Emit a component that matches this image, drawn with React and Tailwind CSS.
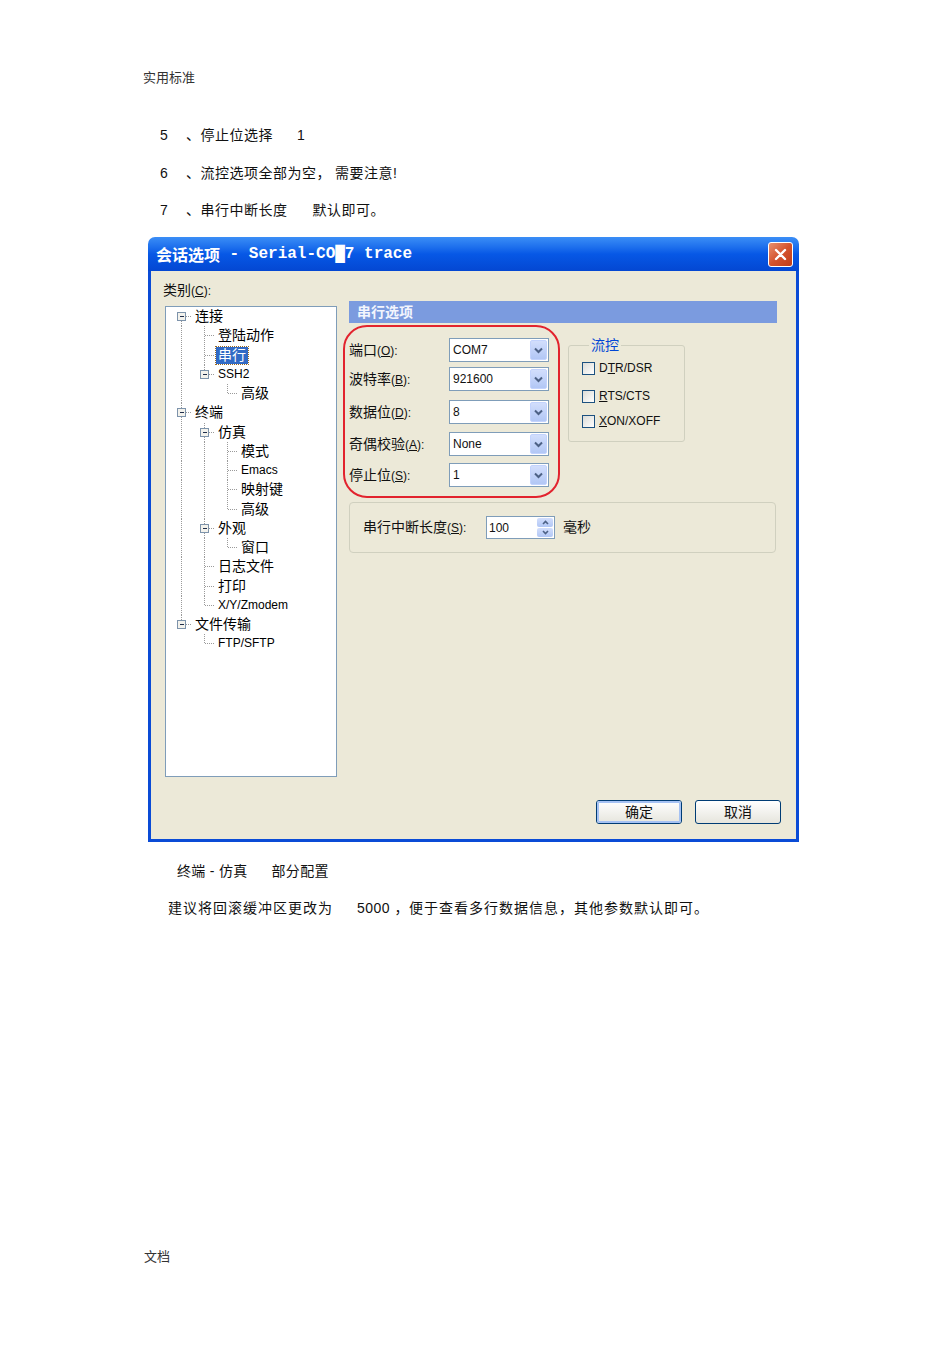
import React from 'react';

const TREE = [
  { t: '连接', l: 0, exp: true },
  { t: '登陆动作', l: 1 },
  { t: '串行', l: 1, sel: true },
  { t: 'SSH2', l: 1, exp: true },
  { t: '高级', l: 2 },
  { t: '终端', l: 0, exp: true },
  { t: '仿真', l: 1, exp: true },
  { t: '模式', l: 2 },
  { t: 'Emacs', l: 2 },
  { t: '映射键', l: 2 },
  { t: '高级', l: 2 },
  { t: '外观', l: 1, exp: true },
  { t: '窗口', l: 2 },
  { t: '日志文件', l: 1 },
  { t: '打印', l: 1 },
  { t: 'X/Y/Zmodem', l: 1 },
  { t: '文件传输', l: 0, exp: true },
  { t: 'FTP/SFTP', l: 1 },
];

// does the item at level k (row i or its ancestor) have a sibling below it
const hasNext = (i, k) => {
  for (let j = i + 1; j < TREE.length; j++) {
    if (TREE[j].l < k) return false;
    if (TREE[j].l === k) return true;
  }
  return false;
};

const line = { stroke: '#9a9a9a', strokeDasharray: '1 1', shapeRendering: 'crispEdges' };

function TreeCell({ full, top, bottom, own, exp }) {
  return (
    <svg width="23" className="h-full shrink-0">
      {full && <line x1="11.5" y1="0" x2="11.5" y2="20" {...line} />}
      {top && <line x1="11.5" y1="0" x2="11.5" y2="9.5" {...line} />}
      {bottom && <line x1="11.5" y1="9.5" x2="11.5" y2="20" {...line} />}
      {own && <line x1="11.5" y1="9.5" x2="22" y2="9.5" {...line} />}
      {exp && (
        <g shapeRendering="crispEdges">
          <rect x="7.5" y="5.5" width="8" height="8" fill="#f3f2ec" stroke="#7d93ab" />
          <line x1="9.5" y1="9.5" x2="14" y2="9.5" stroke="#1f2d4a" />
        </g>
      )}
    </svg>
  );
}

function Tree() {
  return (
    <div className="ml-[14px] mt-[5px] w-[172px] h-[471px] shrink-0 border border-[#7f9db9] bg-white pl-[4px]">
      {TREE.map((r, i) => {
        const cells = [];
        for (let k = 0; k < r.l; k++) cells.push(<TreeCell key={k} full={hasNext(i, k)} />);
        cells.push(
          <TreeCell key="own" top={!(i === 0 && r.l === 0)} bottom={hasNext(i, r.l)} own exp={r.exp} />
        );
        const latin = /^[A-Za-z0-9/]+$/.test(r.t);
        return (
          <div key={i} className="flex h-[19.25px] items-stretch">
            {cells}
            <div className="flex items-center">
              <span
                className={`px-[2px] leading-[17px] ${latin ? 'text-[12px]' : 'text-[14px]'} ${
                  r.sel ? 'bg-[#316ac5] text-white outline-1 outline-dotted outline-[#9a6a20]' : 'text-black'
                }`}
              >
                {r.t}
              </span>
            </div>
          </div>
        );
      })}
    </div>
  );
}

function Select({ value, className }) {
  return (
    <div className={`w-[100px] h-[24px] border border-[#7f9db9] bg-white flex items-center justify-between pl-[3px] pr-[1px] ${className}`}>
      <span className="text-[12px]">{value}</span>
      <div className="w-[17px] h-[20px] rounded-[2px] border border-[#c3d3fd] bg-gradient-to-b from-[#d2defc] to-[#b2c7f5] flex items-center justify-center">
        <svg width="9" height="7" viewBox="0 0 9 7">
          <path d="M1 1.5 L4.5 5 L8 1.5" fill="none" stroke="#4d6185" strokeWidth="2" />
        </svg>
      </div>
    </div>
  );
}

function Label({ cjk, k, rest = '):' }) {
  return (
    <span className="w-[100px] shrink-0 text-[14px]">
      {cjk}
      <span className="text-[12px]">
        (<span className="underline">{k}</span>
        {rest}
      </span>
    </span>
  );
}

function Check({ children, className }) {
  return (
    <div className={`flex items-center h-[20px] ${className}`}>
      <div className="w-[13px] h-[13px] border border-[#1c5180] bg-gradient-to-br from-[#dcdcd7] to-white" />
      <span className="ml-[4px] text-[12px]">{children}</span>
    </div>
  );
}

function Button({ children, focus }) {
  return (
    <div className="w-[86px] h-[24px] rounded-[3px] border border-[#003c74] bg-gradient-to-b from-white to-[#e6e5dd] flex items-center justify-center">
      <div
        className={`w-full h-full rounded-[2px] flex items-center justify-center text-[14px] ${
          focus ? 'border-2 border-[#a6c2f3]' : ''
        }`}
      >
        {children}
      </div>
    </div>
  );
}

function Dialog() {
  return (
    <div className="ml-[148px] mt-[17px] w-[651px] flex flex-col font-['Liberation_Sans','Noto_Sans_CJK_SC',sans-serif]">
      <div className="h-[34px] rounded-t-[7px] bg-gradient-to-b from-[#3b8ef6] via-[#0758e6] to-[#0447d2] flex items-center justify-between pl-[8px] pr-[6px]">
        <div className="text-white font-bold text-[16px] flex items-center">
          <span className="font-['Noto_Sans_CJK_SC',sans-serif]">会话选项</span>
          <span className="font-['Liberation_Mono','Noto_Sans_CJK_SC',monospace] whitespace-pre"> - Serial-CO█7 trace</span>
        </div>
        <div className="w-[25px] h-[25px] rounded-[3px] border border-white bg-gradient-to-br from-[#e9906d] via-[#d4532d] to-[#c13c17] flex items-center justify-center">
          <svg width="13" height="13" viewBox="0 0 13 13">
            <path d="M2 2 L11 11 M11 2 L2 11" stroke="white" strokeWidth="2.4" strokeLinecap="round" />
          </svg>
        </div>
      </div>

      <div className="h-[571px] bg-[#ece9d8] border-x-[3px] border-b-[3px] border-[#0a4bd6] flex flex-col">
        <div className="pl-[12px] pt-[11px] text-[14px] leading-[16px]">
          类别<span className="text-[12px]">(<span className="underline">C</span>):</span>
        </div>

        <div className="mt-[2px] flex items-start">
          <Tree />

          <div className="ml-[12px] w-[428px] flex flex-col">
            <div className="h-[22px] bg-[#7b9bdf] pl-[8px] text-[14px] font-bold leading-[22px] text-[#f2f5fd]">串行选项</div>

            <div className="flex items-start">
              <div className="-ml-[6px] mt-[2px] w-[217px] border-2 border-[#e2232e] rounded-[24px] pl-[4px] pr-[9px] pt-[11px] pb-[9px] flex flex-col">
                <div className="flex items-center">
                  <Label cjk="端口" k="O" />
                  <Select value="COM7" />
                </div>
                <div className="flex items-center mt-[5px]">
                  <Label cjk="波特率" k="B" />
                  <Select value="921600" />
                </div>
                <div className="flex items-center mt-[9px]">
                  <Label cjk="数据位" k="D" />
                  <Select value="8" />
                </div>
                <div className="flex items-center mt-[8px]">
                  <Label cjk="奇偶校验" k="A" />
                  <Select value="None" />
                </div>
                <div className="flex items-center mt-[7px]">
                  <Label cjk="停止位" k="S" />
                  <Select value="1" />
                </div>
              </div>

              <fieldset className="ml-[8px] mt-[14px] w-[117px] h-[105px] border border-[#d0d0bf] rounded-[3px] pl-[13px]">
                <legend className="ml-[7px] px-[2px] text-[14px] leading-[16px] text-[#0046d5]">流控</legend>
                <Check className="mt-[5px]">
                  D<span className="underline">T</span>R/DSR
                </Check>
                <Check className="mt-[8px]">
                  <span className="underline">R</span>TS/CTS
                </Check>
                <Check className="mt-[5px]">
                  <span className="underline">X</span>ON/XOFF
                </Check>
              </fieldset>
            </div>

            <div className="mt-[4px] w-[427px] h-[51px] border border-[#d0d0bf] rounded-[4px] flex items-center pl-[13px]">
              <span className="w-[123px] text-[14px]">
                串行中断长度<span className="text-[12px]">(<span className="underline">S</span>):</span>
              </span>
              <div className="w-[69px] h-[23px] border border-[#7f9db9] bg-white flex items-center justify-between pl-[2px] pr-[1px]">
                <span className="text-[12px]">100</span>
                <div className="w-[16px] h-[19px] flex flex-col gap-[1px]">
                  <div className="flex-1 rounded-[2px] bg-gradient-to-b from-[#d2defc] to-[#b2c7f5] flex items-center justify-center">
                    <svg width="7" height="5" viewBox="0 0 7 5">
                      <path d="M1 4 L3.5 1.5 L6 4" fill="none" stroke="#4d6185" strokeWidth="1.6" />
                    </svg>
                  </div>
                  <div className="flex-1 rounded-[2px] bg-gradient-to-b from-[#d2defc] to-[#b2c7f5] flex items-center justify-center">
                    <svg width="7" height="5" viewBox="0 0 7 5">
                      <path d="M1 1 L3.5 3.5 L6 1" fill="none" stroke="#4d6185" strokeWidth="1.6" />
                    </svg>
                  </div>
                </div>
              </div>
              <span className="ml-[8px] text-[14px]">毫秒</span>
            </div>
          </div>
        </div>

        <div className="mt-auto flex justify-end gap-[13px] pr-[15px] pb-[15px]">
          <Button focus>确定</Button>
          <Button>取消</Button>
        </div>
      </div>
    </div>
  );
}

export default function App() {
  return (
    <div className="w-[950px] h-[1345px] bg-white flex flex-col text-[#111] font-['Liberation_Sans','Noto_Sans_CJK_SC',sans-serif]">
      <p className="ml-[143px] mt-[70px] text-[13px] leading-[16px] text-[#333]">实用标准</p>

      <div className="ml-[160px] mt-[39px] flex flex-col gap-[17.5px] text-[14px] leading-[20px] tracking-[0.5px]">
        <p>
          <span className="inline-block w-[26px]">5</span>、停止位选择<span className="ml-[24px]">1</span>
        </p>
        <p>
          <span className="inline-block w-[26px]">6</span>、流控选项全部为空，<span className="ml-[4px]">需要注意!</span>
        </p>
        <p>
          <span className="inline-block w-[26px]">7</span>、串行中断长度<span className="ml-[25px]">默认即可。</span>
        </p>
      </div>

      <Dialog />

      <p className="ml-[177px] mt-[19px] text-[14px] leading-[20px] tracking-[0.3px]">
        终端 - 仿真<span className="ml-[24px]">部分配置</span>
      </p>
      <p className="ml-[168px] mt-[17px] text-[14px] leading-[20px] tracking-[1px]">
        建议将回滚缓冲区更改为<span className="ml-[24px] tracking-[0.5px]">5000 ，</span>便于查看多行数据信息，其他参数默认即可。
      </p>

      <p className="ml-[144px] mt-[331px] text-[13px] leading-[16px] text-[#333]">文档</p>
    </div>
  );
}
